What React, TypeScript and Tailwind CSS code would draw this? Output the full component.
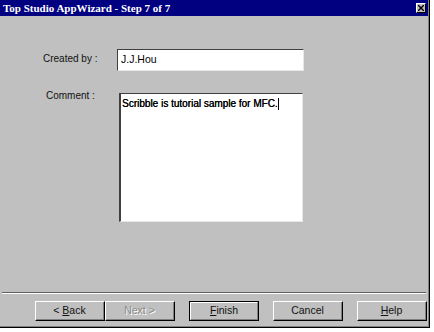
import React from "react";

const sans = { fontFamily: '"Liberation Sans", Arial, sans-serif' };

interface WizButtonProps {
  label: React.ReactNode;
  isDefault?: boolean;
  disabled?: boolean;
}

const WizButton = ({ label, isDefault, disabled }: WizButtonProps) => {
  const outer = isDefault
    ? "border border-black"
    : "border-t border-l border-white border-r border-b border-r-black border-b-black";
  return (
    <div className={`w-[70px] h-[20px] bg-[#c0c0c0] ${outer} flex`}>
      <div
        className={`flex-1 flex items-center justify-center text-[10.5px] ${
          isDefault
            ? "border-t border-l border-white border-r border-b border-r-[#808080] border-b-[#808080]"
            : "border-r border-b border-[#808080]"
        } ${disabled ? "text-[#8a8a8a] [text-shadow:1px_1px_0_#fff]" : "text-[#111]"}`}
        style={sans}
      >
        {label}
      </div>
    </div>
  );
};

const App = () => {
  return (
    <div className="w-[434px] h-[332px] bg-white">
      <div className="w-[430px] h-[328px] border-r border-b border-black">
        <div className="w-full h-full bg-[#c0c0c0] border-r border-b border-[#808080] flex flex-col">
          {/* title bar */}
          <div className="h-[16px] bg-[#000080] flex items-center justify-between pl-[3px] pr-[2px]">
            <span
              className="text-white text-[11px] font-bold leading-none"
              style={{ fontFamily: '"Liberation Serif", "Times New Roman", serif' }}
            >
              Top Studio AppWizard - Step 7 of 7
            </span>
            <div className="w-[10px] h-[10px] bg-[#c0c0c0] border-t border-l border-white border-r border-b border-r-black border-b-black flex items-center justify-center">
              <svg width="6" height="6" viewBox="0 0 6 6">
                <path d="M0 0L6 6M6 0L0 6" stroke="#000" strokeWidth="1.4" />
              </svg>
            </div>
          </div>

          {/* content */}
          <div className="h-[276px] pt-[33px]">
            <div className="flex">
              <div className="w-[117px] pl-[43px] pt-[2px] text-[10px] text-[#111]" style={sans}>
                Created by :
              </div>
              <div className="w-[187px] h-[22px] bg-white border-t border-l border-[#404040] border-r border-b border-r-[#e8e8e8] border-b-[#e8e8e8] pl-[3px] pt-[2px] text-[10.5px] text-black" style={sans}>
                J.J.Hou
              </div>
            </div>
            <div className="flex mt-[22px]">
              <div className="w-[119px] pl-[46px] -mt-[5px] text-[10px] text-[#111]" style={sans}>
                Comment :
              </div>
              <div className="w-[184px] h-[129px] bg-white border-t border-l border-l-2 border-[#404040] border-r border-b border-r-[#e8e8e8] border-b-[#e8e8e8] pl-[1px] pt-[2px] text-[10px] text-black [text-shadow:0.3px_0_0_#000]" style={sans}>
                Scribble is tutorial sample for MFC.
                <span className="inline-block w-px h-[12px] bg-black align-middle" />
              </div>
            </div>
          </div>

          {/* separator */}
          <div className="h-[2px] border-t border-[#606060] border-b border-b-white mx-[2px]" />

          {/* buttons */}
          <div className="flex pt-[7px] pl-[35px] gap-[14px]">
            <div className="flex">
              <WizButton label={<span>&lt; <u>B</u>ack</span>} />
              <WizButton label={<span>Next &gt;</span>} disabled />
            </div>
            <WizButton label={<span><u>F</u>inish</span>} isDefault />
            <WizButton label="Cancel" />
            <WizButton label={<span><u>H</u>elp</span>} />
          </div>
        </div>
      </div>
    </div>
  );
};

export default App;
